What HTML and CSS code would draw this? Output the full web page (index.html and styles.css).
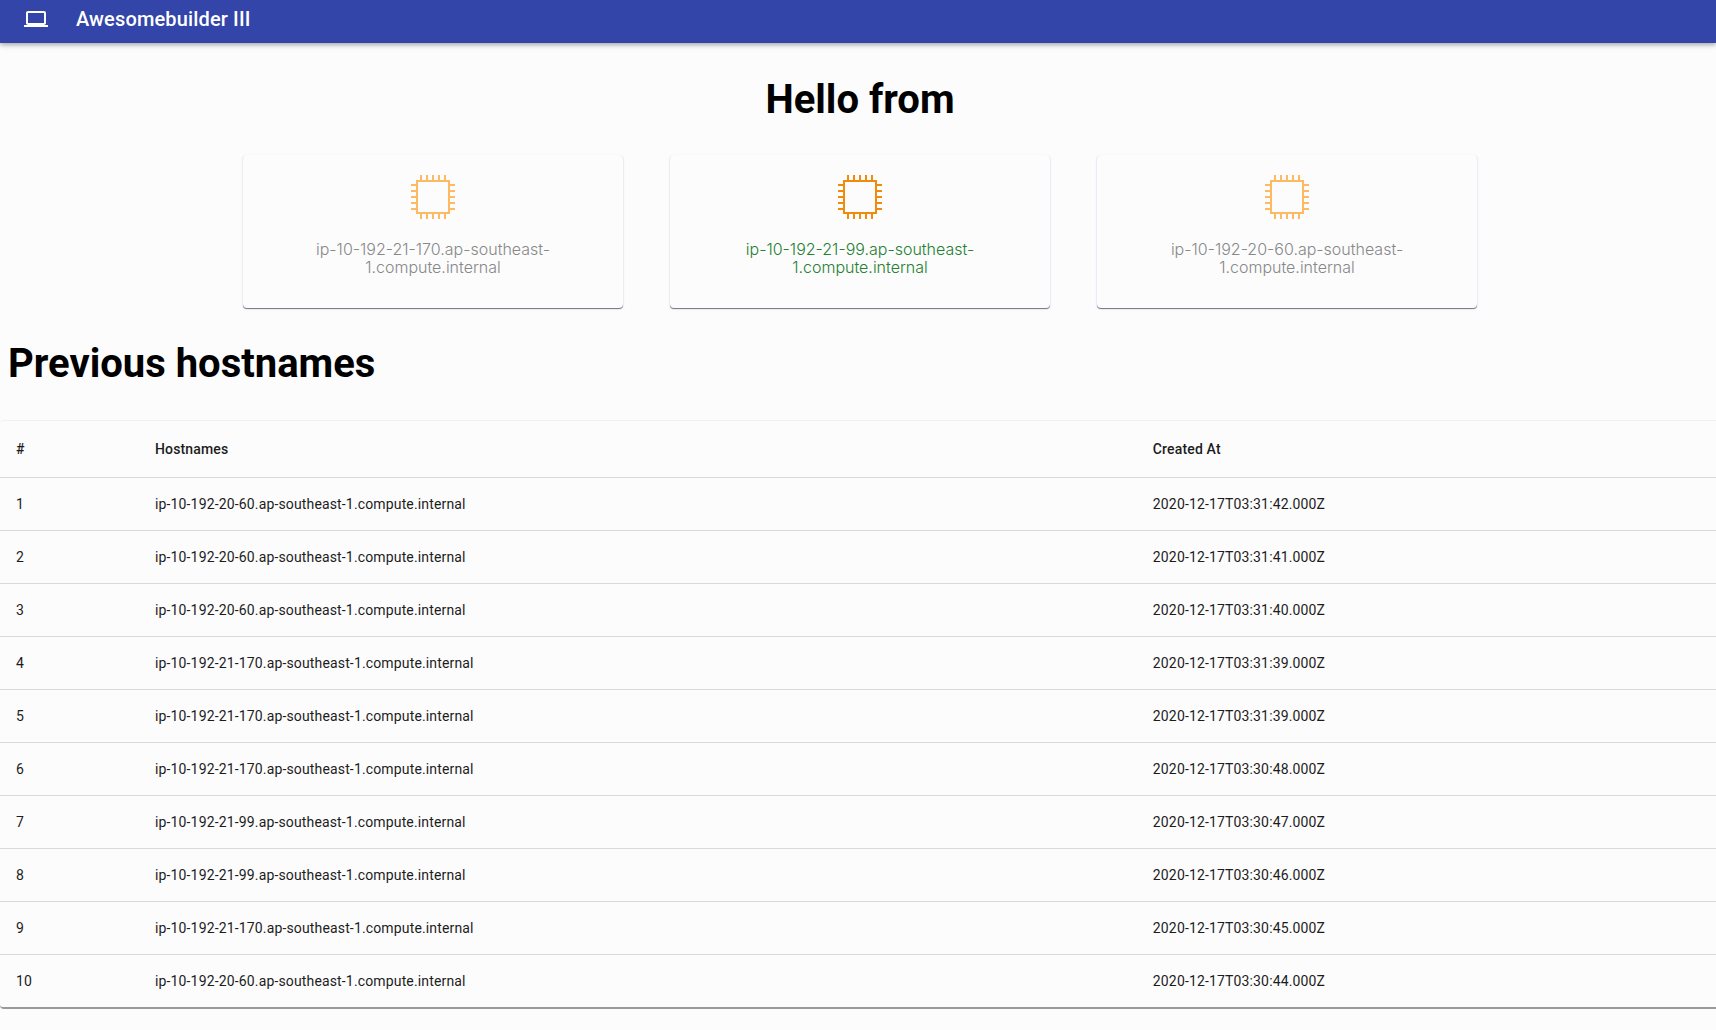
FILE: index.html
```html
<!DOCTYPE html>
<html lang="en">
<head>
<meta charset="utf-8">
<meta name="viewport" content="width=device-width, initial-scale=1">
<title>Awesomebuilder III</title>
<link rel="stylesheet" href="styles.css">
</head>
<body>
<svg class="sprite" aria-hidden="true">
  <symbol id="chip" viewBox="0 0 44 44">
    <path fill="none" stroke="currentColor" stroke-width="2" d="M6 6h32v32H6zM10 0v5M16 0v5M22 0v5M28 0v5M34 0v5M10 39v5M16 39v5M22 39v5M28 39v5M34 39v5M0 10h5M0 16h5M0 22h5M0 28h5M0 34h5M39 10h5M39 16h5M39 22h5M39 28h5M39 34h5"/>
  </symbol>
</svg>
<header class="app-bar">
  <svg class="app-icon" viewBox="0 0 24 24" aria-hidden="true"><path fill="currentColor" d="M20 18c1.100 0 1.990-.9 1.990-2L22 6c0-1.100-.9-2-2-2H4c-1.100 0-2 .9-2 2v10c0 1.100.9 2 2 2H0v2h24v-2h-4zM4 6h16v10H4V6z"/></svg>
  <span class="app-title">Awesomebuilder III</span>
</header>
<main>
  <section class="hello">
    <h1 class="heading">Hello from</h1>
    <div class="cards">
      <article class="card"><svg class="chip" aria-hidden="true"><use href="#chip"/></svg><p class="host">ip-10-192-21-170.ap-southeast-1.compute.internal</p></article>
      <article class="card active"><svg class="chip" aria-hidden="true"><use href="#chip"/></svg><p class="host">ip-10-192-21-99.ap-southeast-1.compute.internal</p></article>
      <article class="card"><svg class="chip" aria-hidden="true"><use href="#chip"/></svg><p class="host">ip-10-192-20-60.ap-southeast-1.compute.internal</p></article>
    </div>
  </section>
  <section>
    <h1 class="heading previous">Previous hostnames</h1>
    <div class="paper">
      <table class="hosts">
        <thead><tr><th class="col-id" scope="col">#</th><th class="col-host" scope="col">Hostnames</th><th scope="col">Created At</th></tr></thead>
        <tbody>
          <tr><td>1</td><td>ip-10-192-20-60.ap-southeast-1.compute.internal</td><td>2020-12-17T03:31:42.000Z</td></tr>
          <tr><td>2</td><td>ip-10-192-20-60.ap-southeast-1.compute.internal</td><td>2020-12-17T03:31:41.000Z</td></tr>
          <tr><td>3</td><td>ip-10-192-20-60.ap-southeast-1.compute.internal</td><td>2020-12-17T03:31:40.000Z</td></tr>
          <tr><td>4</td><td>ip-10-192-21-170.ap-southeast-1.compute.internal</td><td>2020-12-17T03:31:39.000Z</td></tr>
          <tr><td>5</td><td>ip-10-192-21-170.ap-southeast-1.compute.internal</td><td>2020-12-17T03:31:39.000Z</td></tr>
          <tr><td>6</td><td>ip-10-192-21-170.ap-southeast-1.compute.internal</td><td>2020-12-17T03:30:48.000Z</td></tr>
          <tr><td>7</td><td>ip-10-192-21-99.ap-southeast-1.compute.internal</td><td>2020-12-17T03:30:47.000Z</td></tr>
          <tr><td>8</td><td>ip-10-192-21-99.ap-southeast-1.compute.internal</td><td>2020-12-17T03:30:46.000Z</td></tr>
          <tr><td>9</td><td>ip-10-192-21-170.ap-southeast-1.compute.internal</td><td>2020-12-17T03:30:45.000Z</td></tr>
          <tr><td>10</td><td>ip-10-192-20-60.ap-southeast-1.compute.internal</td><td>2020-12-17T03:30:44.000Z</td></tr>
        </tbody>
      </table>
    </div>
  </section>
</main>
</body>
</html>
```
FILE: styles.css
```css
* { box-sizing: border-box; }

body {
  margin: 0;
  background: #fcfcfd;
  color: #000;
  font-family: Roboto, "Liberation Sans", sans-serif;
}

.sprite { display: none; }

.app-bar {
  display: flex;
  align-items: center;
  gap: 28px;
  padding: 3px 24px 8px;
  background: #3345a8;
  color: #fff;
  box-shadow: 0 2px 4px rgba(0, 0, 0, .25), 0 1px 8px rgba(0, 0, 0, .12);
}

.app-icon { width: 24px; height: 24px; }

.app-title {
  font-size: 20px;
  font-weight: 500;
  line-height: 32px;
  letter-spacing: 0.0075em;
}

.hello { padding: 33px 0 0 4px; }

.heading {
  margin: 0;
  font-size: 40px;
  font-weight: 700;
  line-height: 48px;
}

.hello .heading { text-align: center; }

.cards {
  display: grid;
  grid-template-columns: repeat(3, 1fr);
  gap: 47px;
  max-width: 1234px;
  margin: 31px auto 0;
}

.card {
  display: flex;
  flex-direction: column;
  align-items: center;
  gap: 21px;
  padding: 20px 64px 32px;
  border-radius: 4px;
  color: #888;
  text-align: center;
  box-shadow: 0 1px 0 rgba(0, 0, 0, .4), 0 1px 2px rgba(80, 80, 160, .35);
}

.chip { width: 44px; height: 44px; color: #fdba62; }

.host {
  margin: 0;
  font-family: Inter, Roboto, sans-serif;
  font-size: 16px;
  font-weight: 300;
  line-height: 18px;
}

.card.active { color: #258030; }
.card.active .chip { color: #f08c0c; }

.previous { padding: 32px 8px; }

.paper {
  border-top: 1px solid #f0f0f4;
  border-bottom: 2px solid #9a9a9a;
  border-radius: 4px 0 0 4px;
}

.hosts {
  width: 100%;
  border-collapse: collapse;
  table-layout: fixed;
  color: #1c1c1c;
  font-size: 14px;
  line-height: 20px;
  letter-spacing: 0.01071em;
  text-align: left;
}

.hosts th, .hosts td {
  padding: 16px;
  border-bottom: 1px solid #d8d8df;
  font-weight: 400;
}

.hosts th { padding: 18px 16px; font-weight: 500; }
.hosts tr:last-child td { border-bottom: 0; }
.col-id { width: 8.1%; }
.col-host { width: 58.15%; }
```
